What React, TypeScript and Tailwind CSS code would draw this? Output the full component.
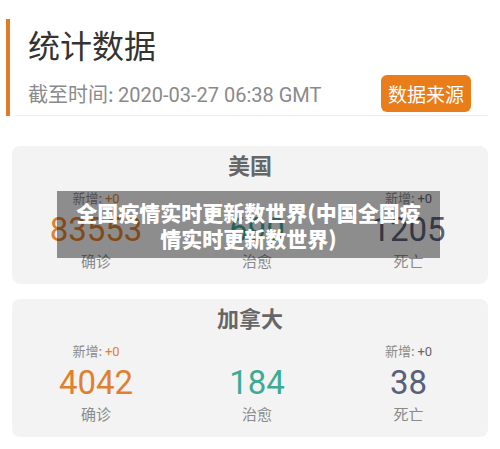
import React from "react";

type Col = { add?: string; addColor?: string; value: string; color: string; label: string };

function Card({ title, cols, top }: { title: string; cols: Col[]; top: string }) {
  return (
    <div className={`mx-[12px] ${top} h-[138px] rounded-[8px] bg-[#f3f3f3] flex flex-col`}>
      <div className="h-[35px] pt-[3px] text-center text-[22px] leading-[30px] font-bold text-[#666666] font-['Noto_Sans_CJK_SC',sans-serif]">
        {title}
      </div>
      <div className="grid grid-cols-[168px_154px_149px]">
        {cols.map((c, i) => (
          <div key={i} className="flex flex-col items-center">
            <div className="mt-[8px] h-[18px] text-[13px] leading-[18px] text-[#8a8a8a] font-['Noto_Sans_CJK_SC',sans-serif]">
              {c.add !== undefined ? (
                <>
                  新增: <span className={`${c.addColor} font-['Roboto',sans-serif]`}>{c.add}</span>
                </>
              ) : null}
            </div>
            <div className={`mt-[4px] h-[38px] text-[33px] leading-[38px] font-['Roboto',sans-serif] ${c.color}`}>
              {c.value}
            </div>
            <div className="mt-[1px] text-[15px] leading-[22px] text-[#8a8a8a] font-['Noto_Sans_CJK_SC',sans-serif]">
              {c.label}
            </div>
          </div>
        ))}
      </div>
    </div>
  );
}

export default function App() {
  return (
    <div className="relative w-[500px] h-[449px] bg-white overflow-hidden">
      <div className="pt-[19px] pl-[6px] pr-[12px]">
        <div className="flex border-l-[4px] border-[#e07b28]">
          <div className="flex-1 ml-[5px] border-b border-[#ececec] pl-[13px] pr-[17px] h-[97px] flex flex-col">
            <div className="mt-[5px] text-[32px] leading-[40px] text-[#333333] font-['Noto_Sans_CJK_SC',sans-serif]">
              统计数据
            </div>
            <div className="mt-[12px] flex items-center justify-between">
              <div className="text-[20px] leading-[26px] text-[#8a8a8a] font-['Noto_Sans_CJK_SC',sans-serif]">
                截至时间: <span className="font-['Roboto',sans-serif]">2020-03-27 06:38 GMT</span>
              </div>
              <div className="w-[90px] h-[37px] -mt-[1px] rounded-[6px] bg-[#e97d1a] text-white text-[19px] leading-[37px] text-center font-['Noto_Sans_CJK_SC',sans-serif]">
                数据来源
              </div>
            </div>
          </div>
        </div>
      </div>

      <Card
        title="美国"
        top="mt-[30px]"
        cols={[
          { add: "+0", addColor: "text-[#e0802e]", value: "83553", color: "text-[#e0802e]", label: "确诊" },
          { value: "690", color: "text-[#3daa95]", label: "治愈" },
          { add: "+0", addColor: "text-[#666666]", value: "1205", color: "text-[#5a6078]", label: "死亡" },
        ]}
      />
      <Card
        title="加拿大"
        top="mt-[15px]"
        cols={[
          { add: "+0", addColor: "text-[#e0802e]", value: "4042", color: "text-[#e0802e]", label: "确诊" },
          { value: "184", color: "text-[#3daa95]", label: "治愈" },
          { add: "+0", addColor: "text-[#666666]", value: "38", color: "text-[#5a6078]", label: "死亡" },
        ]}
      />

      <div className="absolute left-[57px] top-[191px] w-[383px] h-[67px] bg-[rgba(0,0,0,0.42)] flex flex-col items-center justify-center text-white text-[21px] leading-[26px] font-black font-['Noto_Sans_CJK_SC',sans-serif]">
        <div>全国疫情实时更新数世界(中国全国疫</div>
        <div>情实时更新数世界)</div>
      </div>
    </div>
  );
}
